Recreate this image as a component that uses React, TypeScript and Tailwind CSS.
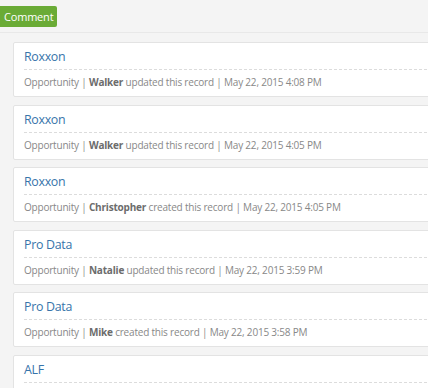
import React from 'react';

interface Activity {
  title: string;
  user?: string;
  action?: string;
  time?: string;
}

const activities: Activity[] = [
  { title: 'Roxxon', user: 'Walker', action: 'updated', time: 'May 22, 2015 4:08 PM' },
  { title: 'Roxxon', user: 'Walker', action: 'updated', time: 'May 22, 2015 4:05 PM' },
  { title: 'Roxxon', user: 'Christopher', action: 'created', time: 'May 22, 2015 4:05 PM' },
  { title: 'Pro Data', user: 'Natalie', action: 'updated', time: 'May 22, 2015 3:59 PM' },
  { title: 'Pro Data', user: 'Mike', action: 'created', time: 'May 22, 2015 3:58 PM' },
  { title: 'ALF' },
];

function ActivityCard({ title, user, action, time }: Activity) {
  return (
    <div className="w-[440px] h-[55px] shrink-0 bg-white border border-[#e3e3e3] rounded-[2px] pl-[10px] pt-[6px]">
      <div className="text-[12.4px] leading-[16px] tracking-[-0.3px] text-[#3774aa]">{title}</div>
      <div className="mt-[4px] border-t border-dashed border-[#dcdcdc]" />
      {user && (
        <div className="mt-[5px] text-[10px] leading-[14px] tracking-[-0.2px] text-[#888888] whitespace-nowrap">
          Opportunity | <span className="font-bold text-[#6c6c6c]">{user}</span> {action} this record | {time}
        </div>
      )}
    </div>
  );
}

export default function App() {
  return (
    <div
      className="w-[428px] h-[388px] overflow-hidden bg-[#f4f4f4]"
      style={{ fontFamily: '"Open Sans", "Liberation Sans", sans-serif' }}
    >
      {/* Toolbar */}
      <div className="flex pt-[6px] pb-[5px] border-b border-[#e8e8e8]">
        <button className="w-[57px] h-[21px] bg-[#6aab36] text-white text-[11px] leading-[21px] tracking-[-0.2px] rounded-r-[2px] text-left pl-[4px]">
          Comment
        </button>
      </div>

      {/* Activity stream */}
      <div className="flex flex-col gap-[7.5px] pl-[13px] pt-[9px]">
        {activities.map((a, i) => (
          <ActivityCard key={i} {...a} />
        ))}
      </div>
    </div>
  );
}
